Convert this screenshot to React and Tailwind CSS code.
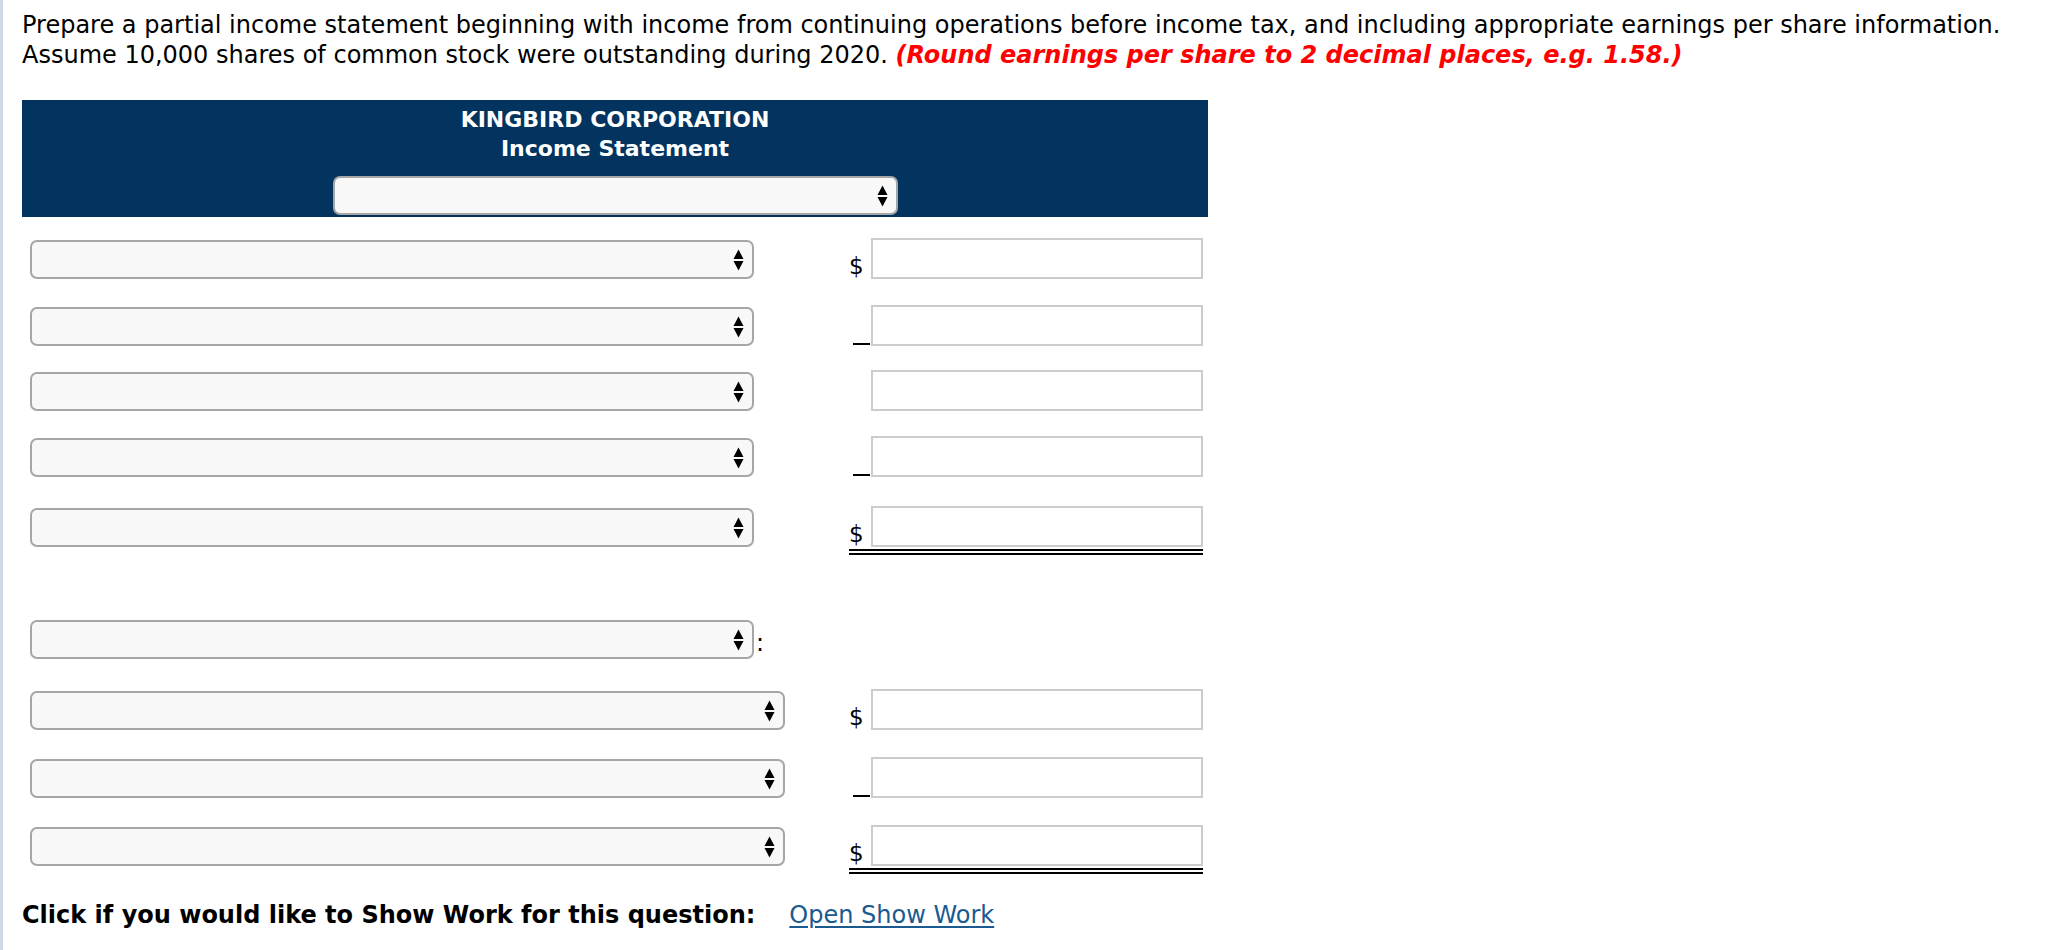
import React from "react";

function Arrows() {
	return (
		<svg width="11" height="22" viewBox="0 0 11 22" className="shrink-0">
			<path d="M5.5 0.5 L10.5 10 L0.5 10 Z" fill="#000" />
			<path d="M0.5 12 L10.5 12 L5.5 21.5 Z" fill="#000" />
		</svg>
	);
}

function Picker({ wide, className = "" }) {
	return (
		<div
			className={`${wide ? "w-[755px]" : "w-[724px]"} h-[39px] rounded-[7px] border-2 border-[#a6a6a6] bg-[#f8f8f8] flex items-center justify-end pr-[8px] ${className}`}>
			<Arrows />
		</div>
	);
}

function Prefix({ kind }) {
	if (kind === "$")
		return <span className="w-[22px] text-[23px] leading-none pb-[1px] text-black">$</span>;
	if (kind === "-")
		return (
			<span className="w-[22px] flex items-end h-full pb-[1px]">
				<span className="block w-[17px] h-[2px] bg-black ml-[4px]" />
			</span>
		);
	return <span className="w-[22px]" />;
}

function Row({ prefix, wide, total, h }) {
	return (
		<div className={`flex items-start ${h}`}>
			<div className="flex items-end h-[41px]">
				<Picker wide={wide} />
			</div>
			<div className="flex-1" />
			<div className="flex flex-col">
				<div className="flex items-end h-[41px]">
					<Prefix kind={prefix} />
					<div className="w-[332px] h-[41px] border-2 border-[#cccccc] bg-white" />
				</div>
				{total && (
					<div className="mt-[2px] flex flex-col gap-[2px]">
						<div className="h-[2px] bg-black" />
						<div className="h-[2px] bg-black" />
					</div>
				)}
			</div>
		</div>
	);
}

export default function App() {
	return (
		<div
			className="min-h-[950px] bg-white border-l-[3px] border-[#cfd9e5] pl-[19px] pt-[10px] text-black"
			style={{ fontFamily: '"DejaVu Sans", Verdana, sans-serif' }}>
			<p className="text-[24px] leading-[30px]">
				Prepare a partial income statement beginning with income from continuing operations before income tax, and including appropriate earnings per share information.
				<br />
				Assume 10,000 shares of common stock were outstanding during 2020.{" "}
				<span className="text-[#ff0000] font-bold italic">
					(Round earnings per share to 2 decimal places, e.g. 1.58.)
				</span>
			</p>

			<div className="w-[1186px] mt-[30px]">
				<div className="bg-[#03345f] h-[117px] flex flex-col items-center pt-[5px]">
					<div className="text-white font-bold text-[22px] leading-[29px]">
						KINGBIRD CORPORATION
					</div>
					<div className="text-white font-bold text-[22px] leading-[29px]">
						Income Statement
					</div>
					<div className="mt-[13px] w-[565px] h-[39px] rounded-[7px] border-2 border-[#a6a6a6] bg-[#f8f8f8] flex items-center justify-end pr-[8px]">
						<Arrows />
					</div>
				</div>

				<div className="pl-[8px] pr-[5px] pt-[21px]">
					<Row prefix="$" h="h-[67px]" />
					<Row prefix="-" h="h-[65px]" />
					<Row prefix="" h="h-[66px]" />
					<Row prefix="-" h="h-[70px]" />
					<Row prefix="$" total h="h-[112px]" />

					<div className="flex items-end h-[71px]">
						<div className="flex items-end h-[41px] self-start">
							<Picker />
							<span className="text-[24px] leading-none ml-[2px] pb-[4px]">:</span>
						</div>
					</div>

					<Row prefix="$" wide h="h-[68px]" />
					<Row prefix="-" wide h="h-[68px]" />
					<Row prefix="$" wide total h="h-[66px]" />
				</div>

				<div className="flex items-center mt-[9px] text-[24px] leading-[30px]">
					<span className="font-bold">Click if you would like to Show Work for this question:</span>
					<a href="#" className="ml-[34px] text-[#1a5a8f] underline underline-offset-[3px]">
						Open Show Work
					</a>
				</div>
			</div>
		</div>
	);
}
